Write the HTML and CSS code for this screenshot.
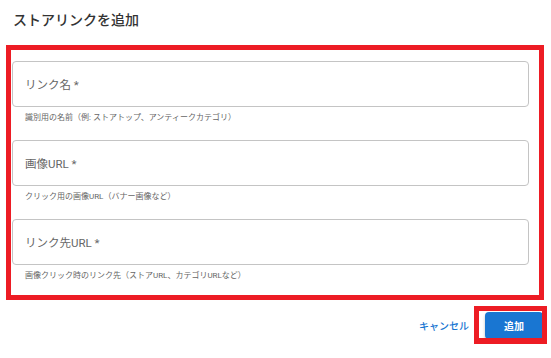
FILE: index.html
```html
<!DOCTYPE html>
<html lang="ja">
<head>
    <meta charset="UTF-8">
    <meta name="viewport" content="width=device-width, initial-scale=1.0">
    <title>ストアリンクを追加</title>
    <link rel="stylesheet" href="styles.css">
</head>
<body>
    <div class="dialog">
        <h2 class="dialog-title">ストアリンクを追加</h2>
        <div class="dialog-content">
            <div class="field">
                <div class="input"><span class="label">リンク名 *</span></div>
                <p class="helper">識別用の名前（例: ストアトップ、アンティークカテゴリ）</p>
            </div>
            <div class="field">
                <div class="input"><span class="label">画像URL *</span></div>
                <p class="helper">クリック用の画像URL（バナー画像など）</p>
            </div>
            <div class="field">
                <div class="input"><span class="label">リンク先URL *</span></div>
                <p class="helper">画像クリック時のリンク先（ストアURL、カテゴリURLなど）</p>
            </div>
            <div class="mark mark-form"></div>
        </div>
        <div class="dialog-actions">
            <button class="btn btn-text">キャンセル</button>
            <div class="btn-wrap">
                <button class="btn btn-primary">追加</button>
                <div class="mark mark-btn"></div>
            </div>
        </div>
    </div>
</body>
</html>
```

FILE: styles.css
```css
body {
    margin: 0;
    background: #fff;
    font-family: Roboto, "Noto Sans CJK JP", sans-serif;
    color: rgba(0, 0, 0, 0.87);
}
.dialog {
    width: 551px;
    height: 358px;
}
.dialog-title {
    margin: 0;
    padding: 10px 13px 0 13px;
    font-size: 14px;
    line-height: 20px;
    font-weight: 500;
    color: #333;
}
.dialog-content {
    position: relative;
    margin-top: 31px;
    padding: 0 22px 0 12px;
    display: flex;
    flex-direction: column;
    gap: 16px;
}
.field {
    display: flex;
    flex-direction: column;
}
.input {
    box-sizing: border-box;
    height: 46px;
    border: 1px solid #c4c4c4;
    border-radius: 4px;
    padding: 0 12px;
    display: flex;
    align-items: center;
}
.label {
    font-size: 11.5px;
    color: #666;
}
.helper {
    margin: 5px 0 0 13px;
    font-size: 8px;
    line-height: 12px;
    color: #666;
}
.mark {
    position: absolute;
    border: 5px solid #ed1c24;
    box-sizing: border-box;
    pointer-events: none;
}
.mark-form {
    left: 6px;
    top: -16px;
    width: 538px;
    height: 255px;
}
.dialog-actions {
    margin-top: 30px;
    padding-right: 8px;
    display: flex;
    justify-content: flex-end;
    align-items: center;
    gap: 16px;
}
.btn {
    border: none;
    font-family: Roboto, "Noto Sans CJK JP", sans-serif;
    font-size: 10px;
    font-weight: 500;
    cursor: pointer;
}
.btn-text {
    background: none;
    color: #1976d2;
    padding: 0;
}
.btn-wrap {
    position: relative;
}
.btn-primary {
    display: block;
    width: 58px;
    height: 27px;
    border-radius: 4px;
    background: #1976d2;
    color: #fff;
    font-weight: 700;
    box-shadow: 0 2px 3px rgba(0, 0, 0, 0.25);
}
.mark-btn {
    left: -11px;
    top: -6px;
    width: 73px;
    height: 38px;
    border-width: 5px 5px 6px 5px;
}
```
